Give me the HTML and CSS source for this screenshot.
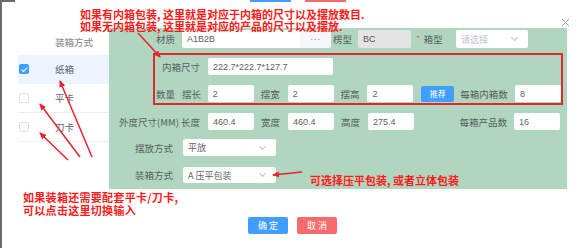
FILE: index.html
```html
<!DOCTYPE html>
<html lang="zh">
<head>
    <meta charset="UTF-8">
    <title>装箱方式</title>
    <link rel="stylesheet" href="styles.css">
</head>
<body>
    <div class="page">
        <div class="top-strip">
            <span class="strip-btn strip-blue"></span>
            <span class="strip-btn strip-red"></span>
        </div>

        <div class="dialog">
            <div class="pack-list">
                <div class="list-head">装箱方式</div>
                <div class="list-row selected"><span class="check checked"></span><span class="row-text">纸箱</span></div>
                <div class="list-row"><span class="check"></span><span class="row-text">平卡</span></div>
                <div class="list-row"><span class="check"></span><span class="row-text">刀卡</span></div>
            </div>

            <div class="form">
                <div class="row row-first">
                    <span class="lbl lbl-material">材质</span>
                    <span class="input input-material">A1B2B</span>
                    <span class="more-btn">···</span>
                    <span class="lbl lbl-flute">楞型</span>
                    <span class="input input-disabled">BC</span>
                    <span class="lbl lbl-boxtype"><i class="req">*</i>箱型</span>
                    <span class="input select select-boxtype"><span class="placeholder">请选择</span><span class="chevron"></span></span>
                </div>

                <div class="inner-box">
                    <div class="row row-inner">
                        <span class="lbl lbl-inner">内箱尺寸</span>
                        <span class="input input-inner">222.7*222.7*127.7</span>
                    </div>
                    <div class="row row-qty">
                        <span class="lbl lbl-qty">数量</span>
                        <span class="lbl lbl-sub">摆长</span>
                        <span class="input input-num">2</span>
                        <span class="lbl lbl-mid">摆宽</span>
                        <span class="input input-num">2</span>
                        <span class="lbl lbl-mid">摆高</span>
                        <span class="input input-num">2</span>
                        <span class="suggest-btn">推荐</span>
                        <span class="lbl lbl-count">每箱内箱数</span>
                        <span class="input input-count">8</span>
                    </div>
                </div>

                <div class="row row-outer">
                    <span class="lbl lbl-outer">外度尺寸(MM) 长度</span>
                    <span class="input input-num">460.4</span>
                    <span class="lbl lbl-mid">宽度</span>
                    <span class="input input-num">460.4</span>
                    <span class="lbl lbl-mid">高度</span>
                    <span class="input input-num">275.4</span>
                    <span class="lbl lbl-products">每箱产品数</span>
                    <span class="input input-count">16</span>
                </div>

                <div class="row row-place">
                    <span class="lbl lbl-side">摆放方式</span>
                    <span class="input select select-wide">平放<span class="chevron"></span></span>
                </div>

                <div class="row row-pack">
                    <span class="lbl lbl-side">装箱方式</span>
                    <span class="input select select-wide">A 压平包装<span class="chevron"></span></span>
                </div>
            </div>
        </div>

        <div class="footer">
            <span class="btn btn-ok">确 定</span>
            <span class="btn btn-cancel">取 消</span>
        </div>

        <svg class="close" width="9" height="9" viewBox="0 0 9 9">
            <path d="M1 1L8 8M8 1L1 8" stroke="#a0a3a8" stroke-width="1" fill="none"/>
        </svg>

        <div class="note note-top">
            <div>如果有内箱包装, 这里就是对应于内箱的尺寸以及摆放数目.</div>
            <div>如果无内箱包装, 这里就是对应的产品的尺寸以及摆放.</div>
        </div>
        <div class="note note-right">可选择压平包装, 或者立体包装</div>
        <div class="note note-bottom">
            <div>如果装箱还需要配套平卡/刀卡,</div>
            <div>可以点击这里切换输入</div>
        </div>

        <svg class="arrows" width="585" height="248" viewBox="0 0 585 248">
            <defs>
                <marker id="head" markerWidth="7" markerHeight="6" refX="6" refY="3" orient="auto" markerUnits="userSpaceOnUse">
                    <path d="M0 0L7 3L0 6Z" fill="#e8232b"/>
                </marker>
            </defs>
            <g stroke="#e8232b" stroke-width="1.5" fill="none" marker-end="url(#head)">
                <line x1="138" y1="33" x2="160" y2="57"/>
                <line x1="92" y1="157" x2="60" y2="81"/>
                <line x1="80" y1="157" x2="40" y2="104"/>
                <line x1="68" y1="160" x2="40" y2="133"/>
                <line x1="302" y1="172" x2="273" y2="175"/>
            </g>
        </svg>
    </div>
</body>
</html>
```

FILE: styles.css
```css
body {
    margin: 0;
    background-color: #fff;
    font-family: "Noto Sans CJK SC", "Noto Sans", sans-serif;
}

.page {
    position: relative;
    width: 585px;
    height: 248px;
    overflow: hidden;
}

/* frame edge of the window behind */
.page::before {
    content: "";
    position: absolute;
    left: 0;
    top: 0;
    width: 2px;
    height: 100%;
    background-color: #6b6b6b;
}

.page::after {
    content: "";
    position: absolute;
    left: 0;
    top: 0;
    width: 15px;
    height: 2px;
    background-color: #6b6b6b;
}

.top-strip {
    display: flex;
    height: 2px;
    padding-left: 250px;
    gap: 14px;
}

.strip-btn {
    width: 41px;
    height: 2px;
}

.strip-blue {
    background-color: #409eff;
}

.strip-red {
    background-color: #f56c6c;
}

.dialog {
    display: flex;
    margin-top: 26px;
}

/* left list */
.pack-list {
    width: 91px;
    margin-left: 18px;
    font-size: 9.5px;
}

.list-head {
    height: 27px;
    line-height: 28px;
    padding-left: 37px;
    color: #909399;
    font-weight: 500;
}

.list-row {
    display: flex;
    align-items: center;
    height: 28px;
    border-bottom: 1px solid #ebeef5;
    color: #606266;
}

.list-row.selected {
    background-color: #ecf5ff;
    border-bottom-color: #ecf5ff;
}

.check {
    width: 8px;
    height: 8px;
    margin-left: 1px;
    border: 1px solid #dcdfe6;
    border-radius: 2px;
    background-color: #fff;
    position: relative;
}

.check.checked {
    background-color: #409eff;
    border-color: #409eff;
}

.check.checked::after {
    content: "";
    position: absolute;
    left: 2.5px;
    top: 0.5px;
    width: 2px;
    height: 5px;
    border: solid #fff;
    border-width: 0 1px 1px 0;
    transform: rotate(45deg);
}

.row-text {
    margin-left: 26px;
}

/* green form */
.form {
    width: 458px;
    height: 161px;
    background-color: #b0d6c0;
    font-size: 9.5px;
    color: #5a5d62;
}

.row {
    display: flex;
    align-items: center;
}

.row-first {
    margin-top: 2px;
    height: 18px;
}

.lbl {
    white-space: nowrap;
    box-sizing: border-box;
}

.lbl-material {
    width: 73px;
    padding-right: 7px;
    text-align: right;
}

.lbl-flute {
    margin-left: 2px;
    width: 25px;
}

.lbl-boxtype {
    margin-left: 5px;
    width: 40px;
    text-align: left;
}

.req {
    font-style: normal;
    color: #f56c6c;
    margin-right: 3px;
}

.input {
    box-sizing: border-box;
    height: 100%;
    display: flex;
    align-items: center;
    padding-left: 5px;
    background-color: #fff;
    border-radius: 2px;
    font-family: "Liberation Sans", "Noto Sans CJK SC", sans-serif;
    font-size: 9px;
    color: #606266;
    position: relative;
}

.input-material {
    width: 118px;
    border-radius: 2px 0 0 2px;
}

.more-btn {
    width: 31px;
    height: 100%;
    display: flex;
    align-items: center;
    justify-content: center;
    background-color: #f5f7fa;
    border-radius: 0 2px 2px 0;
    color: #7d8088;
    font-family: "Liberation Sans", sans-serif;
    font-size: 9px;
    letter-spacing: 0.5px;
}

.input-disabled {
    width: 53px;
    background-color: #e4e4e4;
    color: #555;
}

.select-boxtype {
    width: 72px;
}

.placeholder {
    color: #c0c4cc;
    font-family: "Noto Sans CJK SC", sans-serif;
}

.chevron {
    position: absolute;
    right: 11px;
    top: 50%;
    width: 4px;
    height: 4px;
    margin-top: -4px;
    border: solid #c0c4cc;
    border-width: 0 1px 1px 0;
    transform: rotate(45deg);
}

/* inner box outlined in red */
.inner-box {
    box-sizing: border-box;
    margin-top: 5px;
    margin-left: 44px;
    width: 410px;
    height: 52px;
    border: 2px solid #e0282e;
    padding-top: 3px;
}

.row-inner {
    height: 17px;
}

.lbl-inner {
    width: 53px;
    padding-right: 8px;
    text-align: right;
}

.input-inner {
    width: 125px;
}

.row-qty {
    height: 17px;
    margin-top: 10px;
}

.lbl-qty {
    width: 27px;
    padding-left: 1px;
}

.lbl-sub {
    width: 26px;
}

.input-num {
    width: 46px;
}

.lbl-mid {
    width: 34px;
    padding-right: 8px;
    text-align: right;
}

.suggest-btn {
    margin-left: 8px;
    width: 33px;
    height: 16px;
    display: flex;
    align-items: center;
    justify-content: center;
    background-color: #409eff;
    border-radius: 2px;
    color: #fff;
    font-size: 8px;
}

.lbl-count {
    margin-left: 6px;
    width: 55px;
}

.input-count {
    width: 46px;
}

.row-outer {
    height: 17px;
    margin-top: 8px;
}

.lbl-outer {
    width: 99px;
    padding-right: 8px;
    text-align: right;
}

.lbl-products {
    width: 100px;
    padding-right: 7px;
    text-align: right;
}

.row-place {
    height: 17px;
    margin-top: 9px;
}

.row-pack {
    height: 16px;
    margin-top: 11px;
}

.lbl-side {
    width: 74px;
    padding-right: 10px;
    text-align: right;
}

.select-wide {
    width: 93px;
    font-family: "Noto Sans CJK SC", sans-serif;
}

/* footer buttons */
.footer {
    display: flex;
    justify-content: center;
    gap: 9px;
    margin-top: 28px;
}

.btn {
    width: 40px;
    height: 17px;
    display: flex;
    align-items: center;
    justify-content: center;
    border-radius: 2px;
    color: #fff;
    font-size: 9px;
}

.btn-ok {
    background-color: #409eff;
}

.btn-cancel {
    background-color: #f56c6c;
}

/* overlays */
.close {
    position: absolute;
    left: 561px;
    top: 18px;
}

.note {
    position: absolute;
    color: #ff1a1a;
    font-size: 11px;
    font-weight: 700;
    white-space: nowrap;
}

.note div {
    height: 12px;
    line-height: 12px;
}

.note-top {
    left: 80px;
    top: 8px;
}

.note-right {
    left: 310px;
    top: 172px;
}

.note-bottom {
    left: 23px;
    top: 191px;
    letter-spacing: 0.3px;
}

.note-bottom div {
    height: 13px;
    line-height: 13px;
}

.arrows {
    position: absolute;
    left: 0;
    top: 0;
    pointer-events: none;
}
```
